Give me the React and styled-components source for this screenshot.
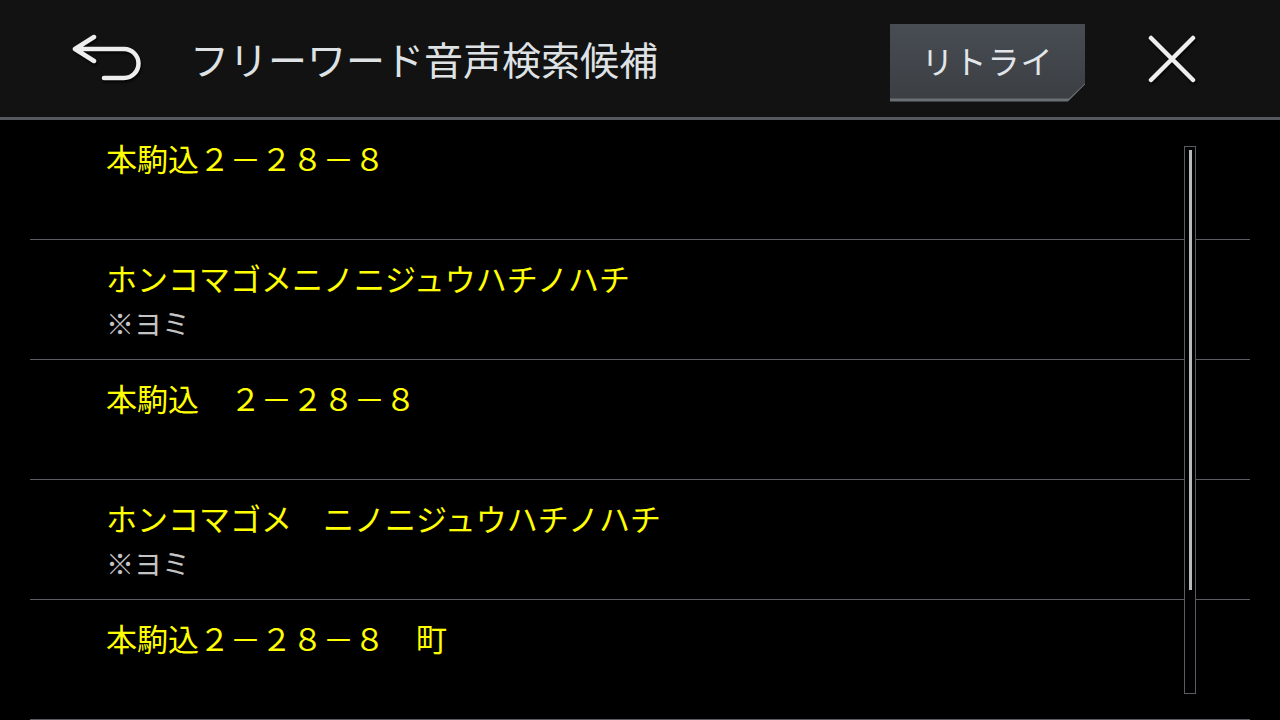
import React from 'react';
import styled, { createGlobalStyle } from 'styled-components';

const GlobalStyle = createGlobalStyle`
  html, body {
    margin: 0;
    padding: 0;
    background: #000;
  }
  body {
    font-family: "Noto Sans CJK JP", "Noto Sans", sans-serif;
    overflow: hidden;
  }
`;

const rows = [
  { main: '本駒込２－２８－８' },
  { main: 'ホンコマゴメニノニジュウハチノハチ', sub: '※ヨミ' },
  { main: '本駒込　２－２８－８' },
  { main: 'ホンコマゴメ　ニノニジュウハチノハチ', sub: '※ヨミ' },
  { main: '本駒込２－２８－８　町' },
];

function BackIcon() {
  return (
    <svg width="72" height="50" viewBox="0 0 72 50">
      <path
        d="M4 15 L23 3 M4 15 L23 27 M4 15 H53 A14.5 14.5 0 0 1 53 44 H33"
        fill="none"
        stroke="#eeeeee"
        strokeWidth="4.5"
        strokeLinecap="round"
        strokeLinejoin="round"
      />
    </svg>
  );
}

function CloseIcon() {
  return (
    <svg width="48" height="48" viewBox="0 0 48 48">
      <path
        d="M3 3 L45 45 M45 3 L3 45"
        fill="none"
        stroke="#eeeeee"
        strokeWidth="4.5"
        strokeLinecap="round"
      />
    </svg>
  );
}

export default function App() {
  return (
    <Screen>
      <GlobalStyle />
      <Header>
        <IconButton $width={72}>
          <BackIcon />
        </IconButton>
        <Title>フリーワード音声検索候補</Title>
        <RetryButton>
          <RetryFace>リトライ</RetryFace>
        </RetryButton>
        <IconButton $width={48}>
          <CloseIcon />
        </IconButton>
      </Header>
      <List>
        {rows.map((r, i) => (
          <Row key={i}>
            <MainText>{r.main}</MainText>
            {r.sub && <SubText>{r.sub}</SubText>}
          </Row>
        ))}
        <ScrollTrack>
          <ScrollThumb />
        </ScrollTrack>
      </List>
    </Screen>
  );
}

const Screen = styled.div`
  width: 1280px;
  height: 720px;
  display: flex;
  flex-direction: column;
  background: #000;
  overflow: hidden;
`;

const Header = styled.div`
  height: 117px;
  flex-shrink: 0;
  display: flex;
  align-items: center;
  padding: 0 84px 0 71px;
  background: #121212;
  border-bottom: 3px solid #55595e;
`;

const IconButton = styled.div`
  width: ${(p) => p.$width}px;
  display: flex;
  align-items: center;
  justify-content: center;
  filter: drop-shadow(1px 2px 1px rgba(0, 0, 0, 0.8));
`;

const Title = styled.div`
  flex: 1;
  margin-left: 47px;
  margin-top: -2px;
  font-size: 39px;
  color: #dfe2e5;
  white-space: nowrap;
`;

const RetryButton = styled.div`
  width: 195px;
  height: 78px;
  margin-right: 63px;
  margin-top: 8px;
  padding-bottom: 3px;
  box-sizing: border-box;
  background: #6a6f74;
  clip-path: polygon(0 0, 100% 0, 100% calc(100% - 17px), calc(100% - 17px) 100%, 0 100%);
`;

const RetryFace = styled.div`
  height: 100%;
  display: flex;
  align-items: center;
  justify-content: center;
  padding-bottom: 2px;
  box-sizing: border-box;
  background: linear-gradient(#484d53, #3b3f44);
  clip-path: polygon(0 0, 100% 0, 100% calc(100% - 15px), calc(100% - 16px) 100%, 0 100%);
  font-size: 32px;
  color: #e2e6ea;
  letter-spacing: 1px;
`;

const List = styled.div`
  position: relative;
  flex: 1;
  display: flex;
  flex-direction: column;
  padding: 0 30px;
`;

const Row = styled.div`
  height: 120px;
  flex-shrink: 0;
  padding: 18px 0 0 76px;
  box-sizing: border-box;
  border-bottom: 1px solid #595d61;
`;

const MainText = styled.div`
  font-size: 31px;
  line-height: 40px;
  color: #ffff00;
  white-space: nowrap;
`;

const SubText = styled.div`
  margin-top: 5px;
  font-size: 28px;
  line-height: 40px;
  color: #c4c4c4;
`;

const ScrollTrack = styled.div`
  position: absolute;
  left: 1184px;
  top: 26px;
  width: 12px;
  height: 548px;
  box-sizing: border-box;
  border: 1.5px solid #5a5e63;
  background: #000;
  padding: 3px 0 0 3.5px;
`;

const ScrollThumb = styled.div`
  width: 3px;
  height: 440px;
  background: #b7bcc1;
`;
